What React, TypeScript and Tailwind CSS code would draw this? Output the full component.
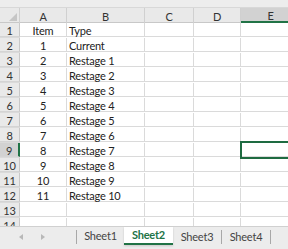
import React from 'react'

const rows: [string, string][] = [
  ['Item', 'Type'],
  ['1', 'Current'],
  ['2', 'Restage 1'],
  ['3', 'Restage 2'],
  ['4', 'Restage 3'],
  ['5', 'Restage 4'],
  ['6', 'Restage 5'],
  ['7', 'Restage 6'],
  ['8', 'Restage 7'],
  ['9', 'Restage 8'],
  ['10', 'Restage 9'],
  ['11', 'Restage 10'],
  ['', ''],
  ['', ''],
]

const cols = ['A', 'B', 'C', 'D', 'E']
const gridCols = 'grid grid-cols-[20px_47px_78px_49px_47px_60px]'

const App: React.FC = () => {
  return (
    <div
      className="w-[288px] h-[249px] overflow-hidden bg-white flex flex-col text-[11px] tracking-[-0.2px] text-[#222]"
      style={{ fontFamily: 'Lato, "Open Sans", sans-serif' }}
    >
      {/* strip above headers */}
      <div className="h-[8px] bg-[#ededed] border-b border-[#d8d8d8]" />

      {/* sheet body */}
      <div className="h-[218px] overflow-hidden">
        <div className={`${gridCols} h-[15px] bg-[#e9e9e9] border-b border-[#c8c8c8]`}>
          <div className="relative border-r border-[#d0d0d0]">
            <div className="absolute right-[2px] bottom-[2px] w-0 h-0 border-l-[8px] border-l-transparent border-b-[8px] border-b-[#c6c6c6]" />
          </div>
          {cols.map(c => (
            <div
              key={c}
              className={`flex items-center justify-center pt-[2px] leading-none text-[#333] border-r border-[#d0d0d0] ${c === 'E' ? 'bg-[#d2d2d2] border-b-2 border-b-[#217346]' : ''}`}
            >
              {c}
            </div>
          ))}
          <div />
        </div>

        {rows.map((r, i) => {
          const n = i + 1
          const active = n === 9
          return (
            <div key={n} className={`${gridCols} h-[15px]`}>
              <div
                className={`flex items-center justify-center pt-[2px] leading-none text-[#333] border-b border-[#d4d4d4] ${active ? 'bg-[#d2d2d2] border-r-2 border-r-[#217346]' : 'bg-[#e9e9e9] border-r border-r-[#c8c8c8]'}`}
              >
                {n}
              </div>
              <div className="flex items-center justify-center pt-[2px] leading-none border-r border-b border-[#dadada]">{r[0]}</div>
              <div className="flex items-center pl-[2px] pt-[2px] leading-none border-r border-b border-[#dadada] whitespace-nowrap">{r[1]}</div>
              <div className="border-r border-b border-[#dadada]" />
              <div className="border-r border-b border-[#dadada]" />
              <div className={`border-b border-[#dadada] ${active ? 'relative' : ''}`}>
                {active && <div className="absolute -top-[2px] -left-[1px] w-[60px] h-[18px] border-2 border-[#1e6b41]" />}
              </div>
              <div className="border-b border-[#dadada]" />
            </div>
          )
        })}
      </div>

      {/* sheet tabs */}
      <div className="flex-1 bg-[#ececec] border-t border-[#d0d0d0] flex items-start text-[#444]">
        <div className="w-[77px] h-[14px] mt-[3px] flex items-center border-r border-[#a8a8a8]">
          <span className="ml-[19px] w-0 h-0 border-y-[3px] border-y-transparent border-r-[4px] border-r-[#b8b8b8]" />
          <span className="ml-[18px] w-0 h-0 border-y-[3px] border-y-transparent border-l-[4px] border-l-[#b8b8b8]" />
        </div>
        <div className="w-[47px] h-[18px] flex items-center justify-center">Sheet1</div>
        <div className="w-[49px] h-[18px] bg-white flex items-center justify-center font-bold text-[#217346] border-b-2 border-[#217346] shadow-[0_1px_2px_rgba(0,0,0,0.15)]">
          Sheet2
        </div>
        <div className="w-[49px] h-[14px] mt-[3px] flex items-center justify-center border-r border-[#a8a8a8]">Sheet3</div>
        <div className="w-[49px] h-[14px] mt-[3px] flex items-center justify-center border-r border-[#a8a8a8]">Sheet4</div>
      </div>
    </div>
  )
}

export default App
